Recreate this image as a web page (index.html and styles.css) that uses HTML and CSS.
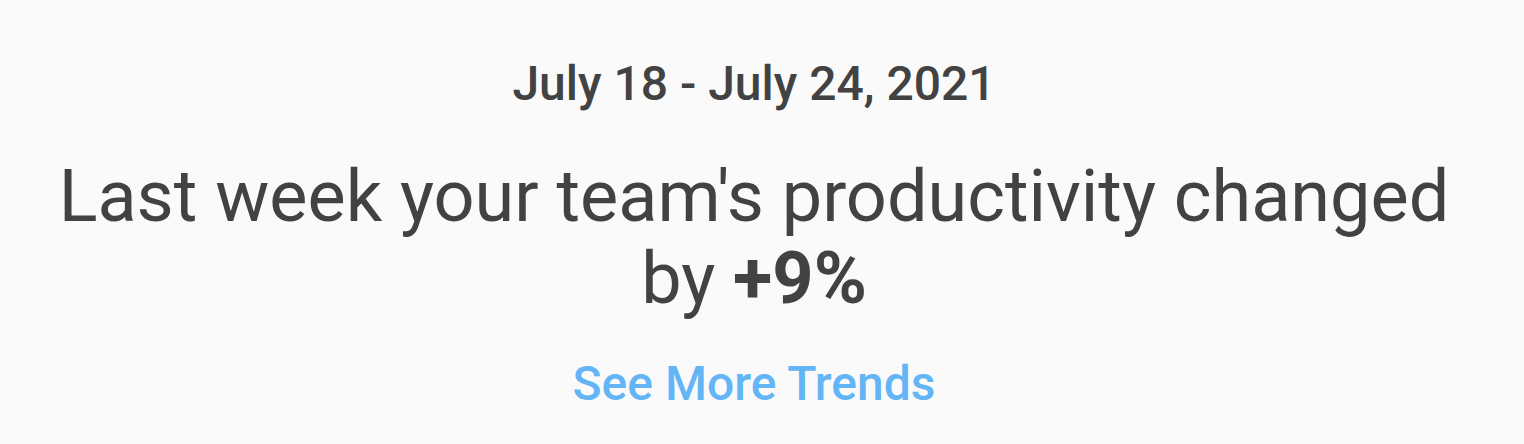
FILE: index.html
```html
<!DOCTYPE html>
<html lang="en">
<head>
  <meta charset="UTF-8">
  <title>Weekly Trend</title>
  <link rel="stylesheet" href="styles.css">
</head>
<body>
  <div class="trend-card">
    <div class="trend-date">July 18 - July 24, 2021</div>
    <h1 class="trend-title">Last week your team's productivity changed by <b>+9%</b></h1>
    <a class="trend-link" href="#">See More Trends</a>
  </div>
</body>
</html>
```
FILE: styles.css
```css
body { margin: 0; background: #fafafa; font-family: Roboto, "Noto Sans", Arial, sans-serif; color: #424242; }
.trend-card { display: flex; flex-direction: column; align-items: center; text-align: center; padding: 54px 48px 0 32px; }
.trend-date { font-size: 48px; font-weight: 500; line-height: 60px; }
.trend-title { font-size: 72px; font-weight: 400; line-height: 82px; margin: 42px 0 0; max-width: 1420px; }
.trend-title b { font-weight: 700; }
.trend-link { font-size: 48px; font-weight: 500; line-height: 60px; color: #64b5f6; text-decoration: none; margin-top: 34px; }
```
